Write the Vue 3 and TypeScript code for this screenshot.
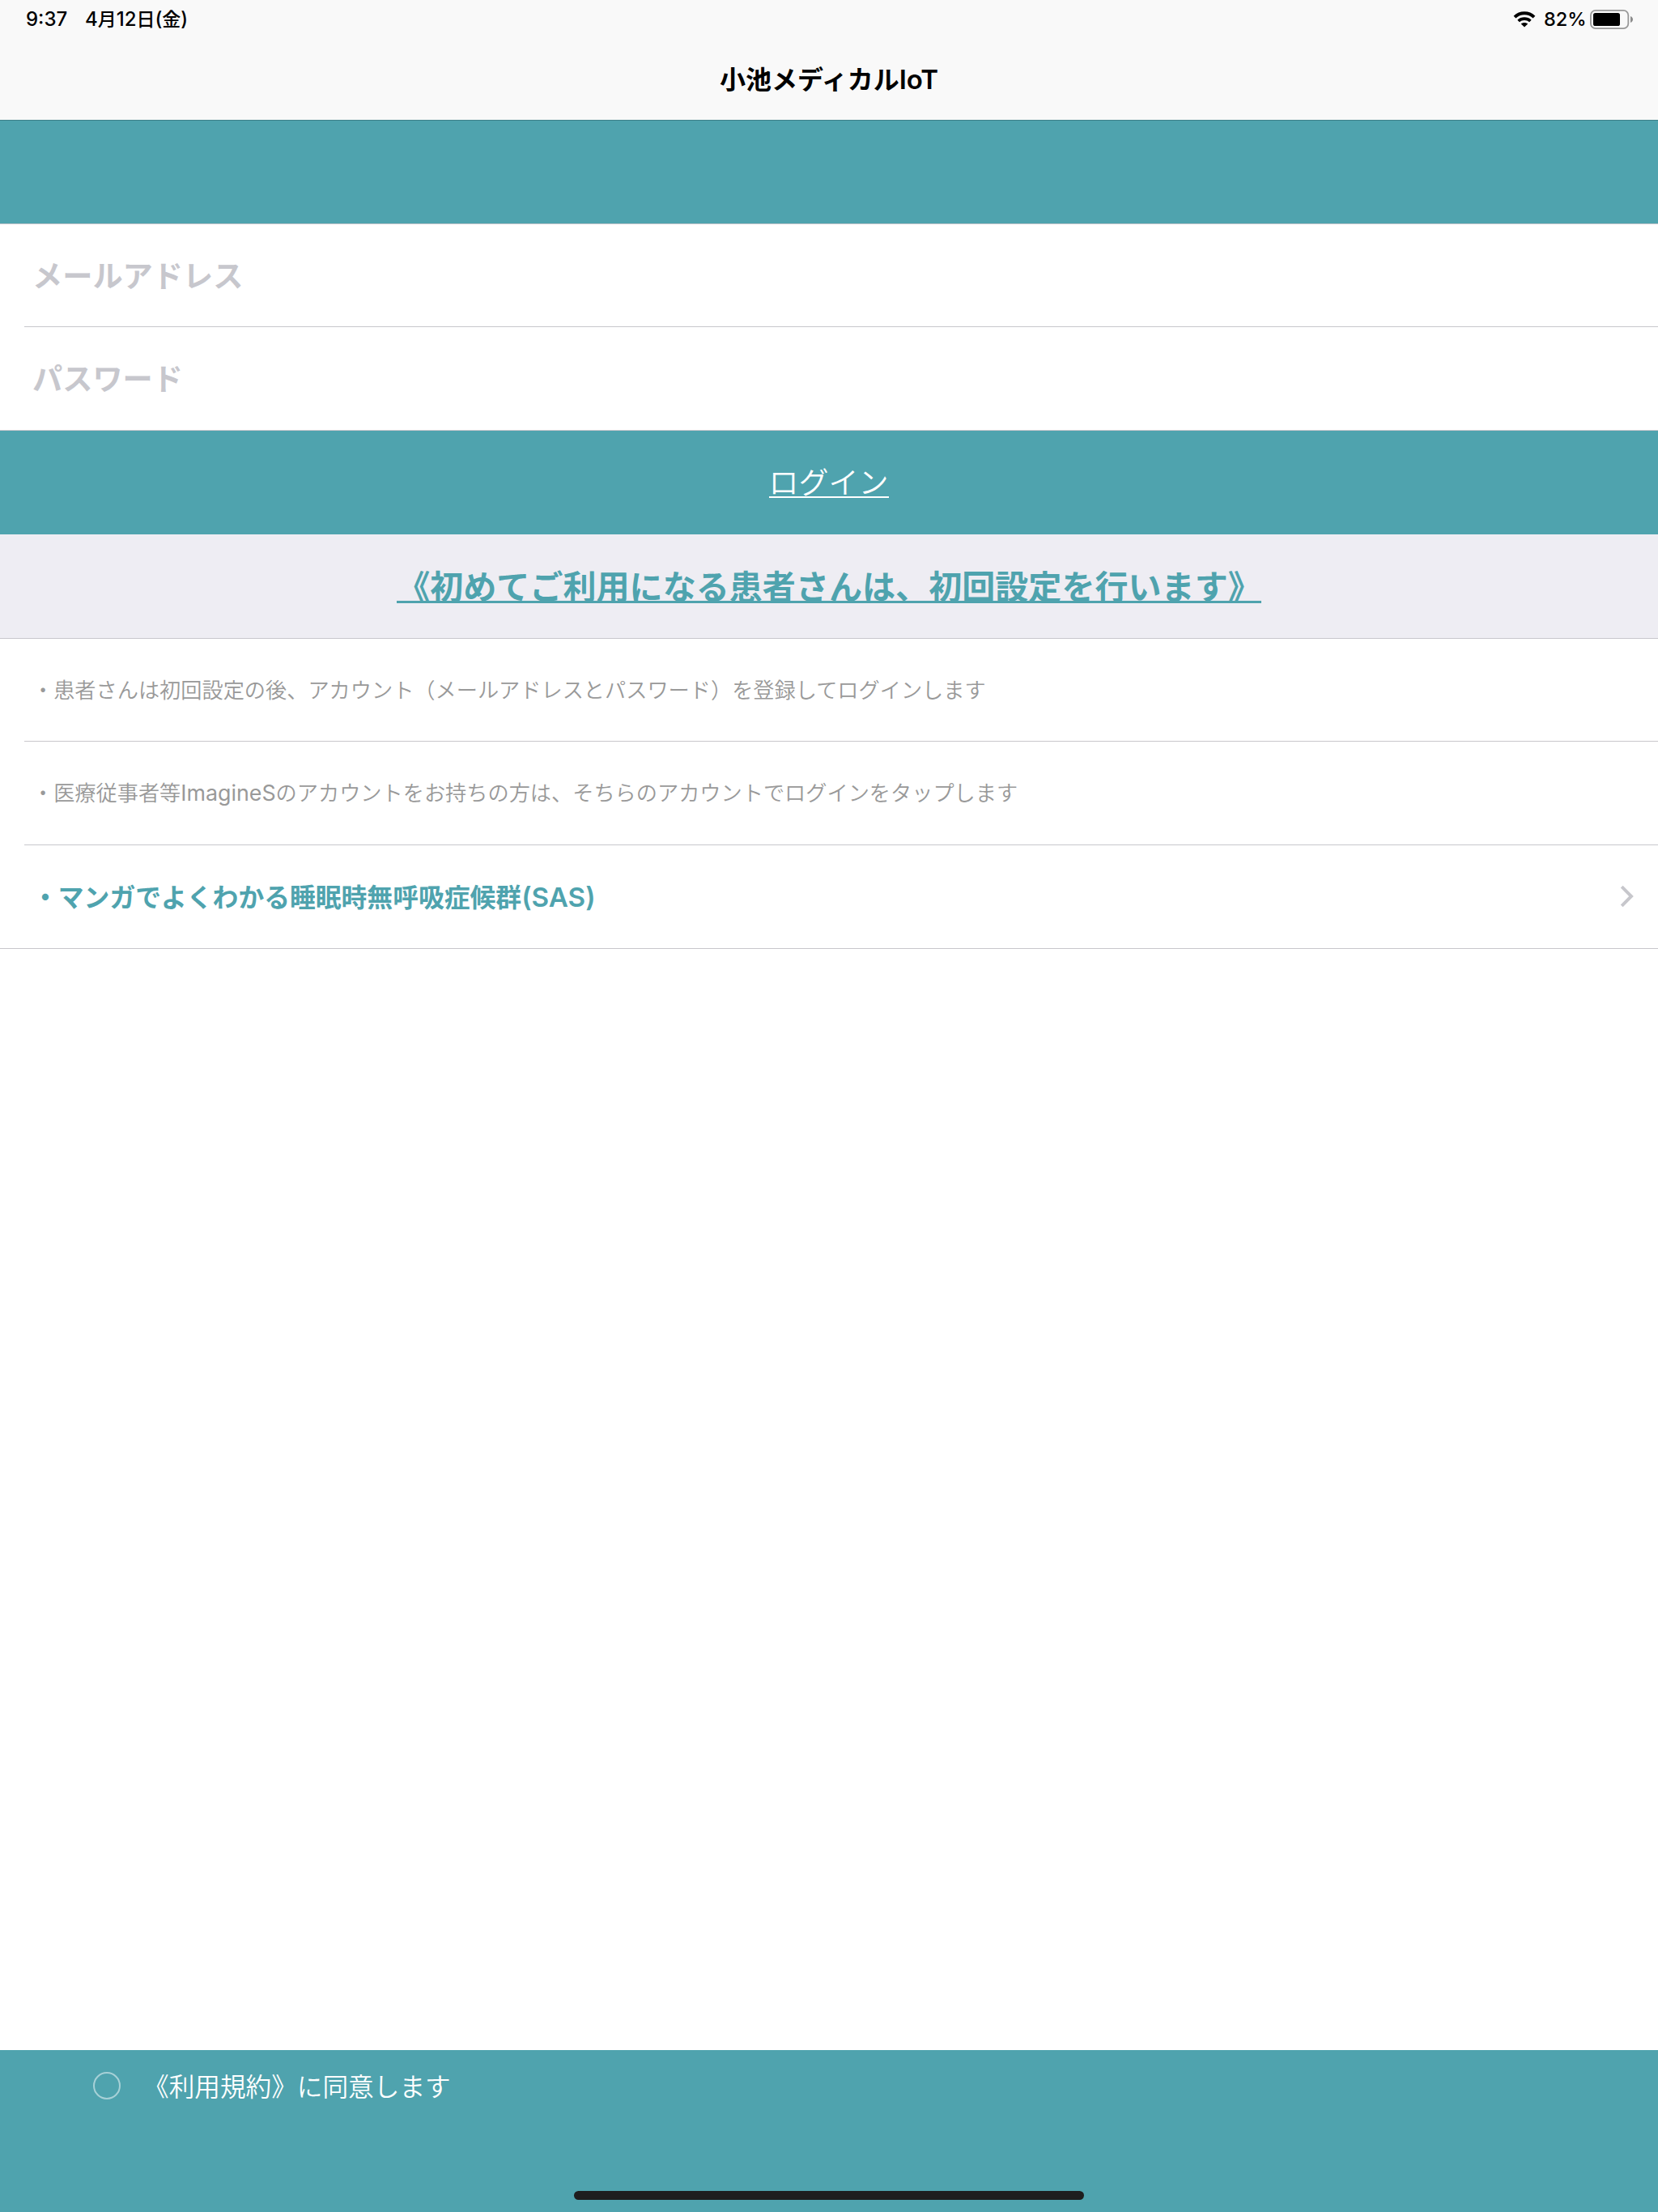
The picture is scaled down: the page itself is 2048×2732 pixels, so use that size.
<script setup lang="ts">
import { ref } from 'vue'

const email = ref('')
const password = ref('')
const agreed = ref(false)
</script>

<template>
  <div class="screen">
    <header class="top">
      <div class="status">
        <span class="time">9:37</span>
        <span class="date">4<b>月</b>12<b>日</b>(<b>金</b>)</span>
        <span class="spacer"></span>
        <svg class="wifi" width="28" height="22" viewBox="0 0 28 22">
          <path d="M2 8.1C8.7 1.7 19.3 1.7 26 8.1" fill="none" stroke="#000" stroke-width="4" />
          <path d="M6.6 13C10.8 9.2 17.2 9.2 21.4 13" fill="none" stroke="#000" stroke-width="3.7" />
          <path d="M14 20.6L9.8 16.4C12.1 14.4 15.9 14.4 18.2 16.4Z" fill="#000" />
        </svg>
        <span class="percent">82%</span>
        <svg class="battery" width="54" height="24" viewBox="0 0 54 24">
          <rect x="0.9" y="0.9" width="46.4" height="22.2" rx="6" fill="none" stroke="#999" stroke-width="1.8" />
          <rect x="4" y="4" width="33" height="16" rx="2.6" fill="#000" />
          <path d="M50 8C54 9.5 54 14.5 50 16Z" fill="#8c8c8c" />
        </svg>
      </div>
      <h1 class="title">小池メディカル<span class="latin">IoT</span></h1>
    </header>

    <div class="band"></div>

    <form class="fields" @submit.prevent>
      <label class="row"><input v-model="email" class="input" type="text" placeholder="メールアドレス" /></label>
      <label class="row last"><input v-model="password" class="input" type="password" placeholder="パスワード" /></label>
      <button class="login" type="submit"><span class="login-text">ログイン</span></button>
    </form>

    <a class="setup"><span class="setup-text">《初めてご利用になる患者さんは、初回設定を行います》</span></a>

    <section class="list">
      <div class="row note">・患者さんは初回設定の後、アカウント（メールアドレスとパスワード）を登録してログインします</div>
      <div class="row note">・医療従事者等<span class="latin">ImagineS</span>のアカウントをお持ちの方は、そちらのアカウントでログインをタップします</div>
      <a class="row last manga">
        <span class="manga-text">・マンガでよくわかる睡眠時無呼吸症候群<span class="latin">(SAS)</span></span>
        <svg class="chevron" width="18" height="28" viewBox="0 0 18 28">
          <path d="M2.2 2.2L14 14L2.2 25.8" fill="none" stroke="#c7c7cc" stroke-width="4" />
        </svg>
      </a>
    </section>

    <footer class="terms">
      <label class="agree" @click="agreed = !agreed">
        <span class="circle" :class="{ on: agreed }"></span>
        <span class="agree-text">《利用規約》に同意します</span>
      </label>
      <div class="home"></div>
    </footer>
  </div>
</template>

<style>
body {
  margin: 0;
}
</style>

<style scoped>
* {
  box-sizing: border-box;
}
.screen {
  width: 2048px;
  height: 2732px;
  display: flex;
  flex-direction: column;
  background: #fff;
  color: #000;
  font-family: 'Noto Sans CJK JP', sans-serif;
  white-space: nowrap;
}
.latin {
  font-family: Inter, sans-serif;
}
.top {
  height: 148px;
  background: #f9f9f9;
}
.status {
  height: 48px;
  display: flex;
  align-items: center;
  padding: 0 30px 0 32px;
  font-family: Inter, 'Noto Sans CJK JP', sans-serif;
  font-size: 24px;
  font-weight: 500;
  line-height: 48px;
}
.time {
  width: 73px;
}
.date b {
  font-family: 'Noto Sans CJK JP', sans-serif;
  font-size: 23px;
  font-weight: 500;
  line-height: 1;
}
.spacer {
  flex: 1;
}
.percent {
  width: 57px;
  margin-left: 10px;
  font-size: 23.5px;
}
.title {
  margin: 0;
  height: 100px;
  line-height: 96px;
  font-size: 32px;
  font-weight: 700;
  text-align: center;
}
.title .latin {
  font-size: 33px;
  font-weight: 600;
}
.band {
  height: 128px;
  background: #4fa3ae;
  border-top: 1px solid #3d7f88;
}
.fields,
.list {
  border-top: 1px solid #c8c7cc;
}
.row {
  height: 128px;
  margin-left: 30px;
  padding-left: 10px;
  padding-bottom: 3px;
  display: flex;
  align-items: center;
  border-bottom: 1px solid #c8c7cc;
}
.row:first-child {
  height: 127px;
}
.row.last {
  margin-left: 0;
  padding-left: 40px;
}
.input {
  width: 1900px;
  padding: 0;
  border: 0;
  outline: 0;
  background: none;
  font: 700 37.2px/56px 'Noto Sans CJK JP', sans-serif;
}
.input::placeholder {
  color: #c7c7cd;
  opacity: 1;
}
.login {
  width: 100%;
  height: 128px;
  display: flex;
  align-items: center;
  justify-content: center;
  padding: 0 1px 0 0;
  border: 0;
  background: #4fa3ae;
  color: #fff;
  font: 350 37px/56px 'Noto Sans CJK JP', sans-serif;
}
.login-text {
  height: 38px;
  line-height: 35px;
  border-bottom: 2px solid #fff;
}
.setup {
  height: 128px;
  display: flex;
  align-items: center;
  justify-content: center;
  background: #eeedf3;
  color: #4fa3ae;
  font-size: 41.07px;
  font-weight: 700;
}
.setup-text {
  height: 42px;
  line-height: 39px;
  border-bottom: 3px solid #4fa3ae;
}
.row.note {
  display: block;
  padding-bottom: 0;
  line-height: 125px;
  color: #999;
  font-size: 26.2px;
  font-weight: 350;
}
.note .latin {
  font-size: 26.8px;
  font-weight: 400;
}
.manga {
  justify-content: space-between;
  padding-right: 29px;
  color: #4fa3ae;
  font-size: 31.8px;
  font-weight: 700;
}
.manga .latin {
  font-size: 33.2px;
  font-weight: 600;
}
.chevron {
  position: relative;
  top: 1px;
}
.terms {
  height: 200px;
  margin-top: auto;
  padding: 20px 0 15px 115px;
  display: flex;
  flex-direction: column;
  justify-content: space-between;
  background: #4fa3ae;
}
.agree {
  height: 48px;
  display: flex;
  align-items: center;
  gap: 28px;
  color: #fff;
  font-size: 31.65px;
  font-weight: 350;
}
.agree-text {
  padding-bottom: 3px;
}
.circle {
  width: 34px;
  height: 34px;
  border: 2px solid #a7d1d7;
  border-radius: 50%;
}
.circle.on {
  background: #fff;
}
.home {
  width: 630px;
  height: 11px;
  margin-left: 594px;
  border-radius: 6px;
  background: #1e1e1e;
}
</style>
